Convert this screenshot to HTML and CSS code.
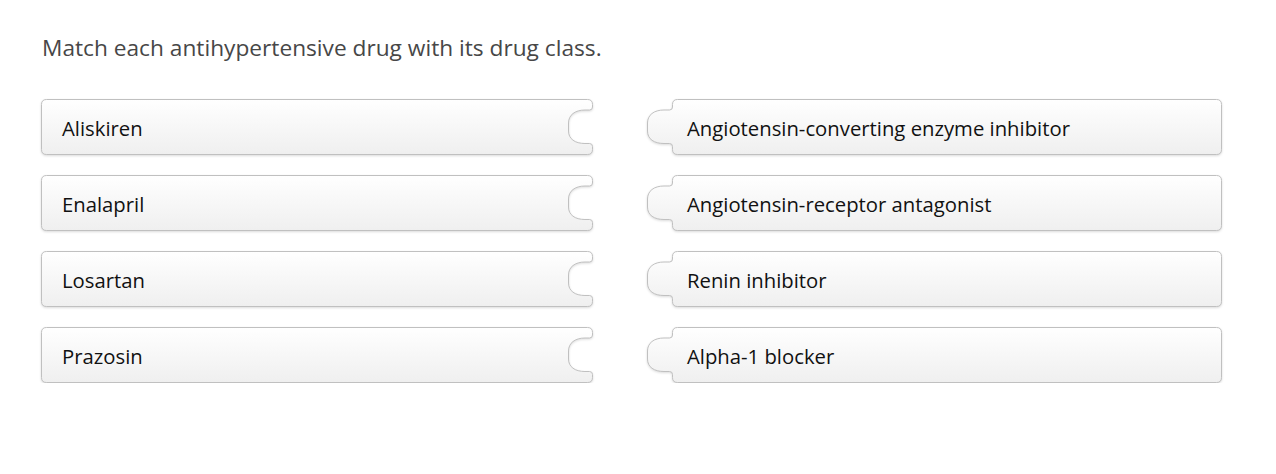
FILE: index.html
```html
<!DOCTYPE html>
<html lang="en">
<head>
<meta charset="utf-8">
<title>Matching</title>
<link rel="stylesheet" href="styles.css">
</head>
<body>
<main class="page">
  <p class="prompt">Match each antihypertensive drug with its drug class.</p>
  <div class="board">
    <div class="column column-left">
      <div class="card card-left">
        <svg class="shape" width="552" height="56" aria-hidden="true"><use href="#hole"/></svg>
        <span class="label">Aliskiren</span>
      </div>
      <div class="card card-left">
        <svg class="shape" width="552" height="56" aria-hidden="true"><use href="#hole"/></svg>
        <span class="label">Enalapril</span>
      </div>
      <div class="card card-left">
        <svg class="shape" width="552" height="56" aria-hidden="true"><use href="#hole"/></svg>
        <span class="label">Losartan</span>
      </div>
      <div class="card card-left">
        <svg class="shape" width="552" height="56" aria-hidden="true"><use href="#hole"/></svg>
        <span class="label">Prazosin</span>
      </div>
    </div>
    <div class="column column-right">
      <div class="card card-right">
        <svg class="shape" width="550" height="56" aria-hidden="true"><use href="#tab"/></svg>
        <span class="label">Angiotensin-converting enzyme inhibitor</span>
      </div>
      <div class="card card-right">
        <svg class="shape" width="550" height="56" aria-hidden="true"><use href="#tab"/></svg>
        <span class="label">Angiotensin-receptor antagonist</span>
      </div>
      <div class="card card-right">
        <svg class="shape" width="550" height="56" aria-hidden="true"><use href="#tab"/></svg>
        <span class="label">Renin inhibitor</span>
      </div>
      <div class="card card-right">
        <svg class="shape" width="550" height="56" aria-hidden="true"><use href="#tab"/></svg>
        <span class="label">Alpha-1 blocker</span>
      </div>
    </div>
  </div>
</main>
<svg class="defs" width="0" height="0" aria-hidden="true">
  <defs>
    <linearGradient id="cardfill2" gradientUnits="userSpaceOnUse" x1="0" y1="0" x2="0" y2="56">
      <stop offset="0" stop-color="#ffffff"/>
      <stop offset="1" stop-color="#efefef"/>
    </linearGradient>
    <path id="hole" fill="url(#cardfill2)" stroke="#c0c0c0" stroke-width="1"
      d="M5.5,0.5 H546.5 Q551.5,0.5 551.5,5.5 V8 Q551.5,11 548.5,11 H544 C534,11 527.5,16 527.5,24 V32 C527.5,40 534,44.5 544,44.5 H548.5 Q551.5,44.5 551.5,47.5 V50.5 Q551.5,55.5 546.5,55.5 H5.5 Q0.5,55.5 0.5,50.5 V5.5 Q0.5,0.5 5.5,0.5 Z"/>
    <path id="tab" fill="url(#cardfill2)" stroke="#c0c0c0" stroke-width="1"
      d="M5.5,0.5 H544.5 Q549.5,0.5 549.5,5.5 V50.5 Q549.5,55.5 544.5,55.5 H5.5 Q0.5,55.5 0.5,50.5 V47.5 Q0.5,44.5 -2.5,44.5 H-8 C-18,44.5 -24.5,40 -24.5,32 V24 C-24.5,16 -18,11 -8,11 H-2.5 Q0.5,11 0.5,8 V5.5 Q0.5,0.5 5.5,0.5 Z"/>
  </defs>
</svg>
</body>
</html>
```

FILE: styles.css
```css
html, body {
  margin: 0;
  padding: 0;
  background: #ffffff;
}

.page {
  padding: 30px 0 0 41px;
  font-family: "Open Sans", "Noto Sans", sans-serif;
}

.prompt {
  margin: 0 0 33px 1px;
  font-size: 22.7px;
  line-height: 36px;
  color: #474747;
}

.board {
  display: flex;
  gap: 79px;
}

.column {
  display: flex;
  flex-direction: column;
  gap: 20px;
}

.card {
  position: relative;
  height: 56px;
  display: flex;
  align-items: center;
}

.card-left {
  width: 552px;
}

.card-right {
  width: 550px;
}

.shape {
  position: absolute;
  top: 0;
  left: 0;
  overflow: visible;
  filter: drop-shadow(0 1px 1px rgba(0, 0, 0, 0.14));
}

.label {
  position: relative;
  padding-top: 2px;
  font-size: 20.3px;
  color: #111111;
  line-height: 24px;
}

.card-left .label {
  padding-left: 21px;
}

.card-right .label {
  padding-left: 15px;
}

.defs {
  position: absolute;
  width: 0;
  height: 0;
}
```
